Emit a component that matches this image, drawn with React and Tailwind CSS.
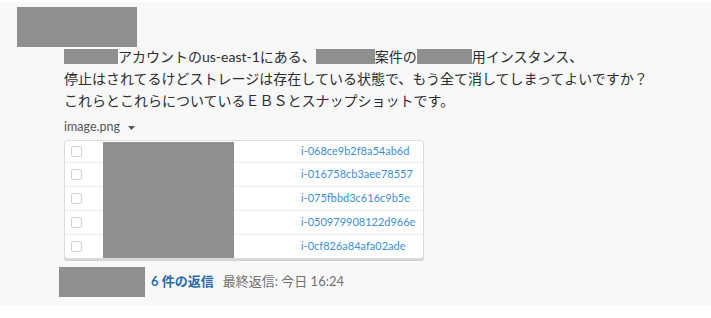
import React from 'react';

// Slack-style thread message with a screenshot attachment (names redacted)
const ids = [
  'i-068ce9b2f8a54ab6d',
  'i-016758cb3aee78557',
  'i-075fbbd3c616c9b5e',
  'i-050979908122d966e',
  'i-0cf826a84afa02ade',
];

function Redacted({ w }) {
  return <span className={`inline-block h-[15px] align-[-2px] bg-[#8f8f8f] ${w}`} />;
}

export default function App() {
  return (
    <div className="w-[711px] h-[318px] bg-white pt-[2px] font-['Lato','Noto_Sans_CJK_JP',sans-serif] overflow-hidden">
      <div className="h-[303px] bg-[#f8f8f8] pt-[5px]">
        {/* sender (redacted) */}
        <div className="ml-[17px] w-[120px] h-[40px] bg-[#8f8f8f]" />

        <div className="pl-[64px] -mt-[1px]">
          <div className="text-[14px] leading-[22px] text-[#2c2d30]">
            <p>
              <Redacted w="w-[54px]" />アカウントのus-east-1にある、<Redacted w="w-[59px]" />案件の<Redacted w="w-[55px]" />用インスタンス、
            </p>
            <p>停止はされてるけどストレージは存在している状態で、もう全て消してしまってよいですか？</p>
            <p>これらとこれらについているＥＢＳとスナップショットです。</p>
          </div>

          <div className="mt-[5px] flex items-center gap-[8px] text-[12.5px] leading-[20px] text-[#555]">
            <span>image.png</span>
            <svg width="7" height="4" viewBox="0 0 7 4" className="mt-[1px]">
              <path d="M0 0h7L3.5 4z" fill="#555" />
            </svg>
          </div>

          {/* attached screenshot */}
          <div className="relative mt-[3px] w-[360px] bg-white border border-[#dcdcdc] rounded-[3px] shadow-[0_2px_0_#d4d4d4]">
            {ids.map((id, i) => (
              <div
                key={id}
                className={`flex items-center ${i === 0 ? 'h-[21px]' : 'h-[24px] border-t border-[#eeeeee]'}`}
              >
                <span className="ml-[6px] w-[11px] h-[11px] border border-[#cfd3d3] rounded-[2px] bg-white" />
                <span className="ml-[219px] text-[11px] text-[#3d8fd1]">{id}</span>
              </div>
            ))}
            <div className="absolute left-[38px] top-[1px] w-[131px] h-[116px] bg-[#8f8f8f]" />
          </div>

          {/* thread replies */}
          <div className="mt-[8px] -ml-[5px] flex items-center text-[13px]">
            <div className="w-[86px] h-[30px] bg-[#8f8f8f]" />
            <span className="ml-[6px] font-bold text-[#2a6aaa]">6 件の返信</span>
            <span className="ml-[9px] text-[#717171]">最終返信: 今日 16:24</span>
          </div>
        </div>
      </div>
    </div>
  );
}
